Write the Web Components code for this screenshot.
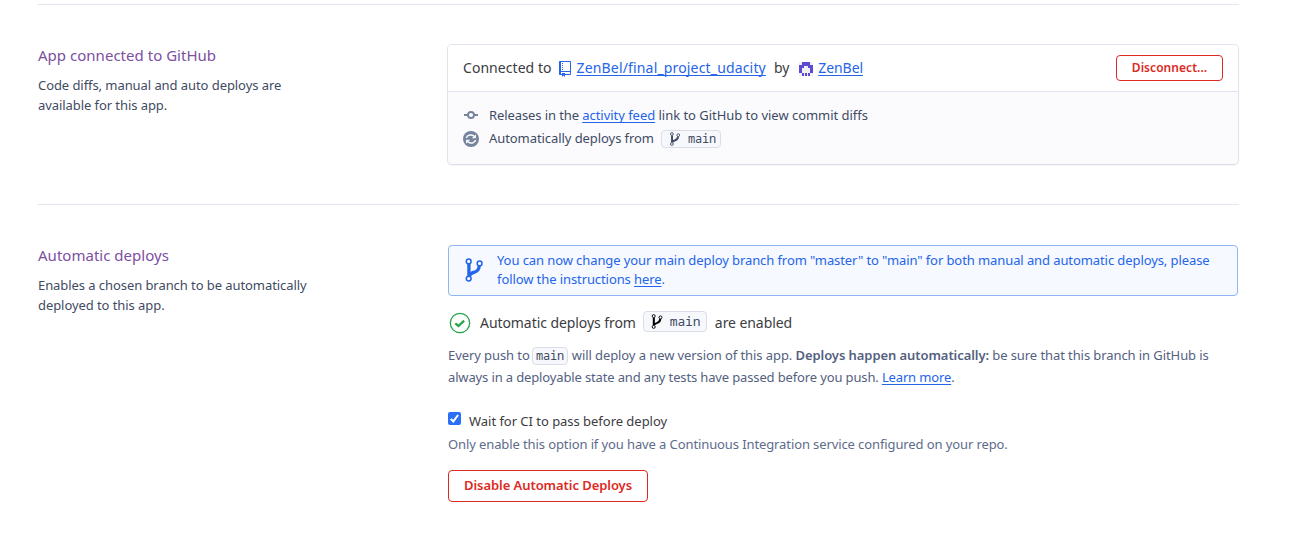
<!DOCTYPE html>
<html lang="en">
<head>
<meta charset="utf-8">
<title>Deploy settings</title>
<style>
body { margin: 0; background: #fff; font: 13px/20px "Noto Sans", "Open Sans", sans-serif; color: #3f4b63; letter-spacing: -0.07px; }
</style>
</head>
<body>
<deploy-page></deploy-page>
<script>
const define = (name, html) => customElements.define(name, class extends HTMLElement {
  constructor() {
    super();
    this.attachShadow({ mode: 'open' }).innerHTML = html;
  }
});

define('text-link', `
<style>
:host { display: inline; color: #2465ea; }
a { color: inherit; text-decoration: underline; text-decoration-thickness: 1px; text-underline-offset: 1.5px; text-decoration-skip-ink: none; }
</style><a><slot></slot></a>`);

define('icon-branch', `
<style>
:host { display: block; width: 12px; height: 14px; }
svg { display: block; width: 100%; height: 100%; fill: none; stroke: currentColor; }
</style>
<svg viewBox="0 0 18 24">
  <circle cx="3.700" cy="3.400" r="2.400" stroke-width="1.500"/><circle cx="3.700" cy="20.600" r="2.400" stroke-width="1.500"/><circle cx="14.600" cy="5.400" r="2.400" stroke-width="1.500"/>
  <path d="M3.900 6v12M14.200 8c-.2 4-1.800 5.200-4.800 6.200-2.600.8-4.300 1.600-5 3.400" stroke-width="3.300"/>
</svg>`);

define('icon-repo', `
<style>:host { display: block; width: 12px; height: 16px; } svg { display: block; }</style>
<svg width="12" height="16" viewBox="0 0 12 16" fill="#2465ea">
  <path d="M0 1h2v12H0z"/>
  <path d="M4 9H3V8h1v1zm0-3H3v1h1V6zm0-2H3v1h1V4zm0-2H3v1h1V2zm8-1v12c0 .55-.45 1-1 1H6v2l-1.500-1.500L3 16v-2H1c-.55 0-1-.45-1-1V1c0-.55.45-1 1-1h10c.55 0 1 .45 1 1zm-1 10H1v2h2v-1h3v1h5v-2zm0-10H2v9h9V1z"/>
</svg>`);

define('icon-identicon', `
<style>:host { display: block; width: 14px; height: 14px; } svg { display: block; }</style>
<svg width="14" height="14" viewBox="0 0 14 14">
  <rect width="14" height="14" fill="#f0f0f0"/>
  <path fill="#5a4bd2" d="M3 0h8v3h3v8h-3V6H9V4H5v2H3v5H0V3h3zM3 11h2v3H3zM6 11h2v3H6zM9 11h2v3H9z"/>
</svg>`);

define('icon-commit', `
<style>:host { display: block; width: 16px; height: 16px; } svg { display: block; }</style>
<svg width="16" height="16" viewBox="0 0 16 16" fill="none" stroke="#76839d" stroke-width="1.900">
  <circle cx="8" cy="8" r="3"/><path d="M1 8h4M11 8h4"/>
</svg>`);

define('icon-sync', `
<style>:host { display: block; width: 16px; height: 16px; } svg { display: block; }</style>
<svg width="16" height="16" viewBox="0 0 16 16">
  <circle cx="8" cy="8" r="8" fill="#76839d"/>
  <g fill="none" stroke="#fbfbfe" stroke-width="1.500">
    <path d="M3.300 6.900C4.300 3.900 8.200 3 11 5.200M12.700 9.100C11.700 12.100 7.800 13 5 10.800"/>
  </g>
  <path fill="#fbfbfe" d="M12.900 3.200v4H8.800zM3.100 12.800v-4h4.100z"/>
</svg>`);

define('icon-check', `
<style>:host { display: block; width: 22px; height: 22px; } svg { display: block; }</style>
<svg width="22" height="22" viewBox="0 0 22 22" fill="none" stroke="#2aa54c">
  <circle cx="11" cy="11" r="9.700" stroke-width="1.300"/><path d="M6.300 11.300l3.200 2.700 5.600-5.400" stroke-width="2.300"/>
</svg>`);

define('branch-tag', `
<style>
:host { display: inline-flex; box-sizing: border-box; align-items: center; height: 18px; width: 60px; padding-left: 7px; border: 1px solid #d9dee8; border-radius: 4px; background: #f7f8fc; color: #3f4b63; font: 12px/16px "Noto Sans Mono", "DejaVu Sans Mono", monospace; letter-spacing: -0.220px; }
icon-branch { color: var(--branch-color, #3f4b63); width: var(--branch-width, 12px); height: var(--branch-height, 14px); margin-right: 7px; }
:host([large]) { width: 64px; height: 21px; padding-left: 7px; font-size: 13px; letter-spacing: -0.2px; }
:host([plain]) { width: 36px; padding-left: 3px; }
:host([plain]) icon-branch { display: none; }
</style><icon-branch></icon-branch><span><slot></slot></span>`);

define('danger-button', `
<style>
:host { display: block; }
button { display: block; box-sizing: border-box; width: 200px; height: 32px; padding: 0 0 3px; border: 1px solid #dc2a24; border-radius: 4px; background: #fff; color: #dc2a24; font: 600 13px/26px "Noto Sans", sans-serif; letter-spacing: -0.060px; }
:host([small]) button { width: 107px; height: 26px; font-size: 12px; line-height: 22px; letter-spacing: 0.050px; padding: 0; }
</style><button><slot></slot></button>`);

define('settings-section', `
<style>
:host { display: grid; grid-template-columns: 410px 791px; box-sizing: border-box; min-height: 200px; padding-top: 40px; border-top: 1px solid #e3e5ef; }
h2 { margin: -1px 0 9px; font: 400 15px/22px "Noto Sans", sans-serif; color: #7c4f9f; letter-spacing: 0.020px; }
.about { width: 290px; line-height: 20px; }
</style>
<header><h2><slot name="title"></slot></h2><div class="about"><slot name="about"></slot></div></header>
<div><slot></slot></div>`);

define('connection-card', `
<style>
:host { display: block; box-sizing: border-box; width: 792px; height: 121px; margin: -1px 0 0 -1px; border: 1px solid #e1e4ec; border-bottom-color: #d9dde6; border-radius: 5px; background: #fbfbfe; overflow: hidden; box-shadow: 0 1px 2px #0000000a; }
.head { display: flex; align-items: center; box-sizing: border-box; height: 47px; padding: 0 15px; border-bottom: 1px solid #e1e4ec; background: #fff; font-size: 14px; color: #3c3c42; }
icon-repo { margin: 2px 6px 0 7px; }
icon-identicon { margin: 2px 5px 0 10px; }
.by { margin-left: 8px; }
danger-button { margin-left: auto; }
.body { padding: 12px 15px; }
.row { display: flex; align-items: center; height: 24px; }
.row + .row { height: 22px; }
.row > :first-child { margin-right: 10px; }
.row:first-child > * { margin-top: -2px; }
.row + .row > span { margin-top: -2px; }
branch-tag { margin-left: 7px; }
</style>
<div class="head">
  <span style="letter-spacing:0.050px">Connected to</span><icon-repo></icon-repo>
  <text-link style="letter-spacing:0.160px">ZenBel/final_project_udacity</text-link>
  <span class="by">by</span><icon-identicon></icon-identicon>
  <text-link>ZenBel</text-link>
  <danger-button small>Disconnect...</danger-button>
</div>
<div class="body">
  <div class="row"><icon-commit></icon-commit><span style="letter-spacing:-0.030px"><span style="letter-spacing:-0.1px">Releases in the </span><text-link>activity feed</text-link> link to GitHub to view commit diffs</span></div>
  <div class="row"><icon-sync></icon-sync><span>Automatically deploys from</span><branch-tag>main</branch-tag></div>
</div>`);

define('info-notice', `
<style>
:host { display: flex; box-sizing: border-box; width: 790px; height: 51px; border: 1px solid #8fb5f2; border-radius: 4px; background: #f6f9ff; color: #2465ea; line-height: 19px; letter-spacing: -0.090px; }
icon-branch { width: 18px; height: 24px; margin: 12px 14px 0 16px; }
.text { padding-top: 5px; width: 730px; }
</style>
<icon-branch></icon-branch><div class="text"><slot></slot></div>`);

define('deploy-status', `
<style>
:host { display: flex; align-items: center; height: 22px; margin: 16px 0 0 1px; font-size: 14px; color: #3c3c42; }
icon-check { margin-right: 9px; }
span { margin-top: -1px; }
branch-tag { margin: -4px 8px 0 7px; --branch-color: #000; --branch-height: 15px; }
</style>
<icon-check></icon-check><span>Automatic deploys from</span><branch-tag large>main</branch-tag><span>are enabled</span>`);

define('ci-option', `
<style>
:host { display: block; margin-top: 23px; }
label { display: flex; height: 20px; color: #3c3c42; line-height: 20px; letter-spacing: -0.030px; }
i { display: block; width: 13px; height: 13px; border-radius: 2px; background: #2a6ff5; margin: 1px 8px 0 0; }
svg { display: block; }
p { margin: 3px 0 0; color: #5e6c8c; letter-spacing: -0.105px; line-height: 20px; }
</style>
<label><i><svg width="13" height="13" viewBox="0 0 13 13" fill="none" stroke="#fff" stroke-width="2"><path d="M2.700 6.900l2.600 2.500 4.800-6.400"/></svg></i><span>Wait for CI to pass before deploy</span></label>
<p>Only enable this option if you have a Continuous Integration service configured on your repo.</p>`);

define('deploy-page', `
<style>
:host { display: block; width: 1201px; padding: 4px 0 0 38px; }
.note { color: #54617f; line-height: 22px; margin: 10px 0 0; letter-spacing: -0.085px; }
b { font-weight: 600; letter-spacing: -0.070px; }
.note branch-tag { margin: 0 0.5px 0 -1px; }
.action { margin-top: 16px; }
</style>
<settings-section>
  <span slot="title">App connected to GitHub</span>
  <span slot="about">Code diffs, manual and auto deploys are<br>available for this app.</span>
  <connection-card></connection-card>
</settings-section>
<settings-section>
  <span slot="title">Automatic deploys</span>
  <span slot="about">Enables a chosen branch to be automatically<br>deployed to this app.</span>
  <info-notice>You can now change your main deploy branch from "master" to "main" for both manual and automatic deploys, please<br>follow the instructions <text-link>here</text-link>.</info-notice>
  <deploy-status></deploy-status>
  <div class="note">Every push to <branch-tag plain>main</branch-tag> will deploy a new version of this app. <b>Deploys happen automatically:</b> be sure that this branch in GitHub is<br><span style="letter-spacing:-0.14px">always in a deployable state and any tests have passed before you push. <text-link>Learn more</text-link>.</span></div>
  <ci-option></ci-option>
  <danger-button class="action">Disable Automatic Deploys</danger-button>
</settings-section>`);
</script>
</body>
</html>
